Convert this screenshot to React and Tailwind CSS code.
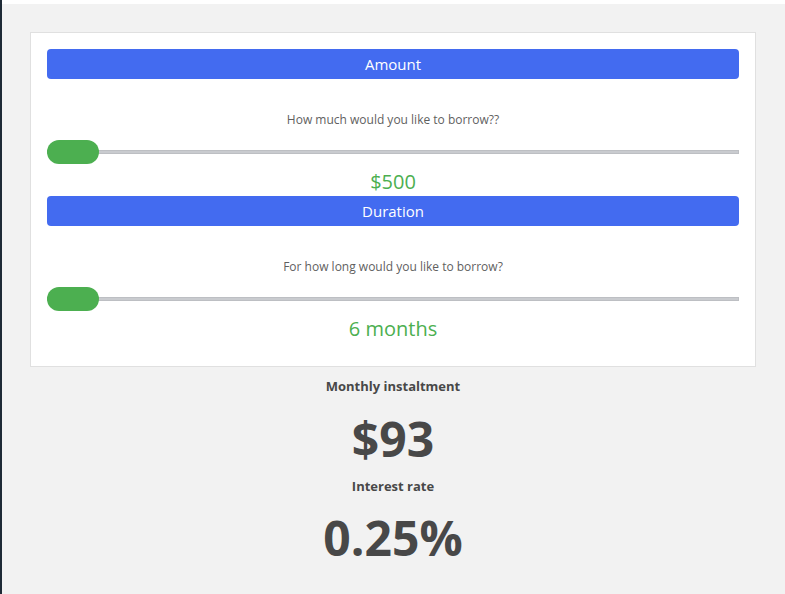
const sections = [
  { title: 'Amount', question: 'How much would you like to borrow??', value: '$500' },
  { title: 'Duration', question: 'For how long would you like to borrow?', value: '6 months' },
]

function Slider() {
  return (
    <div className="relative h-6 flex items-center">
      <div className="w-full h-[4px] bg-[#c9cbcf] border border-[#bdbfc3]" />
      <div className="absolute left-0 top-0 h-6 w-[52px] rounded-full bg-[#4caf50]" />
    </div>
  )
}

function Section({ title, question, value }) {
  return (
    <div>
      <div className="h-[30px] rounded bg-[#436bf0] text-white text-[15px] flex items-center justify-center">
        {title}
      </div>
      <p className="mt-[32px] text-[12px] leading-[18px] text-[#5f5f5f] text-center">{question}</p>
      <div className="mt-[11px]">
        <Slider />
      </div>
      <p className="mt-[4px] text-[20px] leading-[28px] text-[#4caf50] text-center">{value}</p>
    </div>
  )
}

export default function App() {
  return (
    <div
      className="min-h-[594px] bg-[#f2f2f2] border-l-2 border-[#1e2a36] text-[#444]"
      style={{ fontFamily: '"Open Sans", "Noto Sans", sans-serif' }}
    >
      <div className="h-[4px] bg-white" />
      <div className="pl-[28px] pr-[29px] pt-[28px]">
        <div className="bg-white border border-[#e0e0e0] px-4 pt-4 pb-[23px]">
          {sections.map((s) => (
            <Section key={s.title} {...s} />
          ))}
        </div>
        <div className="text-center text-[#484848]">
          <p className="mt-[9px] text-[13px] font-bold leading-[20px]">Monthly instaltment</p>
          <p className="mt-[13px] text-[48px] font-bold leading-[60px]">$93</p>
          <p className="mt-[7px] text-[13px] font-bold leading-[20px]">Interest rate</p>
          <p className="mt-[12px] text-[48px] font-bold leading-[60px]">0.25%</p>
        </div>
      </div>
    </div>
  )
}
